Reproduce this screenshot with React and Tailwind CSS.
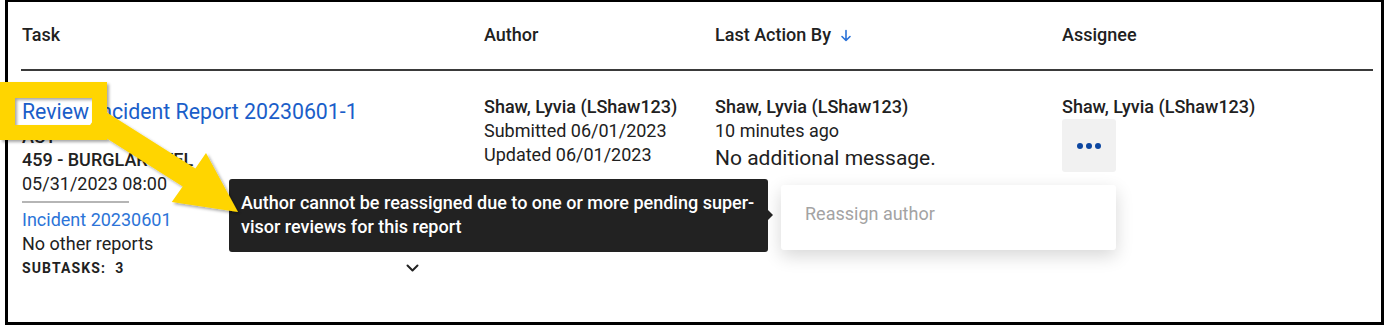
import React from "react";

function DownArrow() {
  return (
    <svg width="12" height="13" viewBox="0 0 12 13" fill="none" stroke="#2a72d8" strokeWidth="1.6" strokeLinecap="round" strokeLinejoin="round">
      <path d="M6 1.5v10M2 7.5l4 4 4-4" />
    </svg>
  );
}

function Chevron() {
  return (
    <svg width="13" height="8" viewBox="0 0 13 8" fill="none" stroke="#222" strokeWidth="2" strokeLinecap="round" strokeLinejoin="round">
      <path d="M1.5 1.5l5 5 5-5" />
    </svg>
  );
}

export default function App() {
  return (
    <div className="relative w-[1384px] h-[325px] pl-[5px] bg-white" style={{ fontFamily: "Roboto, 'Noto Sans', Arial, sans-serif" }}>
      <div className="w-[1379px] h-[325px] border-black border-l-[3px] border-r-[3px] border-b-[3px] border-t-2 text-[#212121]">
        <div className="ml-[13px] w-[1352px]">
          {/* header */}
          <div className="grid grid-cols-[463px_231px_347px_1fr] pt-[21px] pb-[22px] border-b-2 border-[#3a3a3a] text-[18px] leading-[24px] font-medium">
            <div className="pl-[1px]">Task</div>
            <div>Author</div>
            <div className="flex items-center gap-[9px]">
              <span>Last Action By</span>
              <DownArrow />
            </div>
            <div>Assignee</div>
          </div>
          {/* row */}
          <div className="grid grid-cols-[463px_231px_347px_1fr] pt-[24px] text-[18px] leading-[24px]">
            <div className="pl-[1px]">
              <div className="mt-[3px] text-[21.3px] leading-[28px] text-[#1a5ec9]">Review Incident Report 20230601-1</div>
              <div className="leading-[22px] font-medium">ACT</div>
              <div className="font-medium">459 - BURGLARY TEL</div>
              <div>05/31/2023 08:00</div>
              <div className="mt-[5px] mb-[5px] w-[107px] h-[2px] bg-[#b5b5b5]"></div>
              <div className="text-[#2c74d8]">Incident 20230601</div>
              <div>No other reports</div>
              <div className="flex items-center justify-between w-[397px]">
                <span className="text-[14px] font-bold tracking-[0.08em]">SUBTASKS:&nbsp; 3</span>
                <Chevron />
              </div>
            </div>
            <div>
              <div className="font-medium">Shaw, Lyvia (LShaw123)</div>
              <div>Submitted 06/01/2023</div>
              <div>Updated 06/01/2023</div>
            </div>
            <div>
              <div className="font-medium">Shaw, Lyvia (LShaw123)</div>
              <div>10 minutes ago</div>
              <div className="text-[21px] leading-[30px]">No additional message.</div>
            </div>
            <div>
              <div className="font-medium">Shaw, Lyvia (LShaw123)</div>
              <div className="w-[54px] h-[53px] rounded-[3px] bg-[#f1f1f1] flex items-center justify-center gap-[3px]">
                <span className="w-[6px] h-[6px] rounded-full bg-[#0d47a1]"></span>
                <span className="w-[6px] h-[6px] rounded-full bg-[#0d47a1]"></span>
                <span className="w-[6px] h-[6px] rounded-full bg-[#0d47a1]"></span>
              </div>
            </div>
          </div>
        </div>
      </div>

      {/* dropdown menu */}
      <div className="absolute left-[781px] top-[185px] w-[335px] h-[65px] bg-white rounded-[3px] shadow-[0_6px_18px_rgba(0,0,0,0.16)] pl-[24px] pt-[17px] text-[18px] leading-[24px] text-[#a3a3a3]">
        Reassign author
      </div>

      {/* tooltip */}
      <div className="absolute left-[229px] top-[179px] w-[539px] h-[73px] bg-[#222222] rounded-[3px] pl-[12px] pt-[12px] text-[18px] leading-[24px] text-white font-medium">
        <div>Author cannot be reassigned due to one or more pending super-</div>
        <div>visor reviews for this report</div>
        <div className="absolute right-[-5px] top-[31px] w-0 h-0 border-t-[5px] border-b-[5px] border-l-[5px] border-t-transparent border-b-transparent border-l-[#222222]"></div>
      </div>

      {/* yellow annotation */}
      <svg className="absolute left-0 top-0" width="260" height="230" viewBox="0 0 260 230">
        <defs>
          <filter id="sh" x="-20%" y="-20%" width="140%" height="140%">
            <feDropShadow dx="2" dy="2" stdDeviation="1.8" floodColor="#000" floodOpacity="0.35" />
          </filter>
        </defs>
        <g filter="url(#sh)" fill="#FFD500">
          <polygon points="101.3,109 195.3,168.5 206,153 238,212 171.75,202 182.7,186.5 88.7,127" />
          <path fillRule="evenodd" d="M0 82H107V140H0Z M15 98V125H92V98Z" />
        </g>
      </svg>
    </div>
  );
}
